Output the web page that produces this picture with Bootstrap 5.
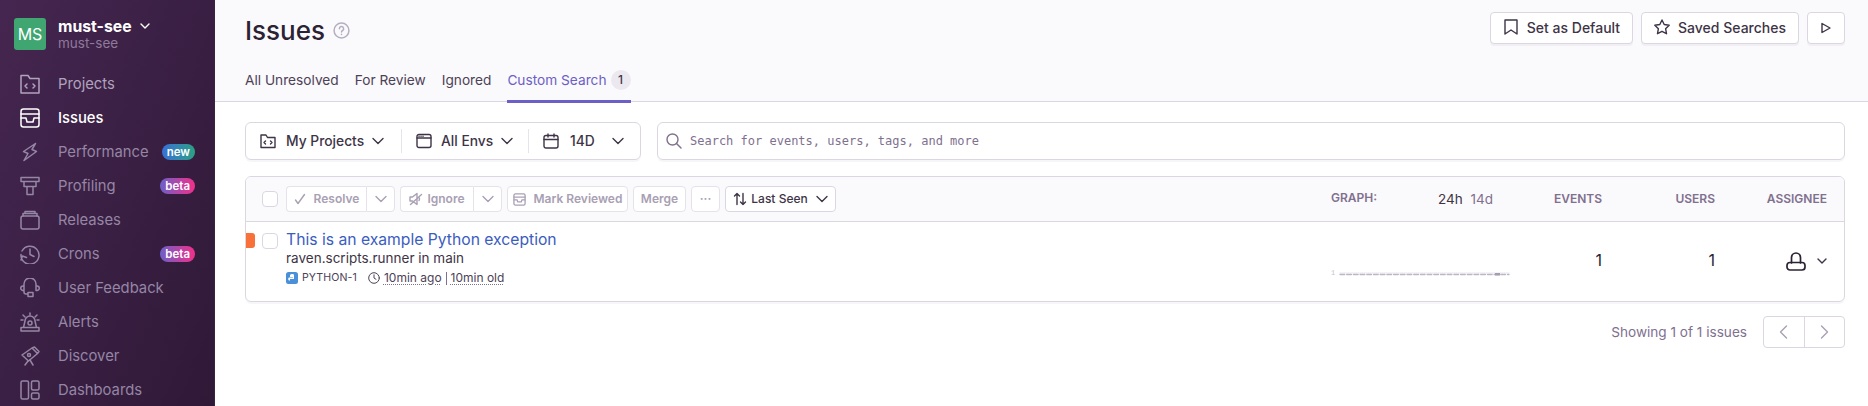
<!DOCTYPE html>
<html><head><meta charset="utf-8">
<link href="https://cdn.jsdelivr.net/npm/bootstrap@5.3.0/dist/css/bootstrap.min.css" rel="stylesheet">
<style>
html,body{height:406px;overflow:hidden}
body{font-family:Inter,"Liberation Sans",sans-serif;color:#2b2233;background:#fff;font-size:15px}
svg{fill:none;stroke:currentColor;stroke-width:1.4;stroke-linecap:round;stroke-linejoin:round;flex:none}
.shell{height:406px}
.side{width:215px;height:406px;background:linear-gradient(294deg,#2f1937 0%,#452650 100%);box-shadow:inset -1px 0 0 #3a2243;overflow:hidden;flex:none}
.orgbox{padding:18px 14px 0;height:67px}
.avatar{width:32px;height:32px;background:#3fa672;border-radius:3px;color:#fff;font-size:16px;line-height:32px;text-align:center;flex:none}
.orgname{color:#fff;font-weight:700;font-size:15.8px;line-height:17px}
.orgsub{color:#8f7a9b;font-size:13.5px;line-height:16px}
.navitem{height:34px;padding-left:20px;color:#9586a5;font-size:14.8px}
.navitem svg{width:20px;height:20px;stroke-width:1.5}
.navitem .lbl{margin-left:18px;flex:1}
.navitem.on{color:#fff;font-weight:500}
.navitem.plain{color:#b0a3bd}
.tagpill{font-size:11.5px;color:#fff;font-weight:600;border-radius:9px;height:16px;line-height:16px;padding:0 5px;margin-right:20px}
.tnew{background:linear-gradient(90deg,#3a6fd8,#2ba185)}
.tbeta{background:linear-gradient(90deg,#6c5fc7,#f32f8c)}
.mainp{min-width:0}
.head{height:102px;background:#faf9fb;border-bottom:1px solid #dbd6e1;padding:0 23px 0 30px}
.ttl{font-size:26px;font-weight:500;line-height:31px;margin:0;color:#2b2233}
.qmark{width:17px;height:17px;color:#b6aec0}
.hbtn{height:32px;background:#fff;border:1px solid #dbd6e1;border-radius:4px;font-size:14px;font-weight:500;color:#3e3446;padding:0 12px 2px;box-shadow:0 2px 0 rgba(37,11,54,.04)}
.htop{padding-top:12px;height:60px}
.tabsrow{gap:16px;height:42px}
.tabby{font-size:13.7px;color:#4d4158;height:42px;padding-top:10px;border-bottom:3px solid transparent}
.tabby.act{color:#6c5fc7;border-bottom-color:#6c5fc7;margin-bottom:-1px;height:43px}
.cnt{background:#ebe8ef;color:#3e3446;font-size:12px;font-weight:500;width:20px;height:20px;border-radius:10px;line-height:20px;text-align:center;margin-left:4px}
.bodyp{padding:20px 23px 0 30px}
.pagefilt{width:396px;height:38px;border:1px solid #dbd6e1;border-radius:6px;box-shadow:0 2px 0 rgba(37,11,54,.04);flex:none}
.pf{font-size:13.8px;font-weight:500;color:#3e3446;height:100%;padding-left:14px}
.pf .txt{margin-left:10px}
.pf2 .txt{margin-left:9px}
.pf3 .txt{margin-left:11px}
.pf1{width:155px}.pf2{width:126px}
.vsep{width:1px;height:24px;background:#e7e3eb}
.srch{height:38px;border:1px solid #dbd6e1;border-radius:6px;margin-left:16px;font-family:"DejaVu Sans Mono",monospace;font-size:12px;color:#80708f;padding-left:8px;box-shadow:0 2px 0 rgba(37,11,54,.04)}
.tblbox{margin-top:16px;border:1px solid #dbd6e1;border-radius:6px;height:126px;box-shadow:0 2px 0 rgba(37,11,54,.04);overflow:hidden}
.thead{height:45px;background:#faf9fb;border-bottom:1px solid #dbd6e1;padding-left:16px}
.cb{width:16px;height:16px;border:1px solid #dbd6e1;border-radius:4px;background:#fff;flex:none}
.actrow{gap:5px}
.actb{height:26px;border:1px solid #e6e2ea;border-radius:4px;background:#fff;font-size:12px;font-weight:600;color:#a9a0b3;justify-content:center}
.actb.dark{color:#3e3446;border-color:#dbd6e1;font-weight:500;width:111px}
.grpl{border-radius:4px 0 0 4px;border-right:0}
.grpr{border-radius:0 4px 4px 0;width:29px}
.w-res{width:80px}.w-ign{width:73px}.w-mark{width:121px}.w-merge{width:53px}.w-dots{width:29px}
.hcol{font-size:12px;font-weight:600;color:#80708f;text-transform:uppercase}
.cgraph{width:107px}.cperiod{width:112px}.cnum1{width:52px}.cnum2{width:113px}.cass{width:112px}
.hcolg{margin-top:-3px}
.period{font-size:13.5px;color:#3e3446}
.period span{color:#80708f}
.hlast{margin-right:17px}
.row1{height:78px;position:relative}
.lev{position:absolute;left:0;top:11px;width:9px;height:15px;background:#f9713a;border-radius:0 3px 3px 0}
.rowmain{padding:8px 0 0 16px}
.cbrow{margin-top:3px}
.itl{color:#3b5cc0;font-size:15.7px;line-height:19px}
.ism{font-size:13.5px;color:#3e3446;line-height:17px;margin-top:1px}
.imeta{font-size:12px;color:#4d4158;line-height:18px;margin-top:2px}
.imeta u{text-decoration:underline dotted #80708f;text-underline-offset:2px}
.pyid{font-size:10.6px;letter-spacing:.1px}
.metasep{border-left:1px solid #80708f;height:13px}
.clock{stroke-width:1;margin-left:11px}
.pyic{stroke:none}
.numc{font-size:16px;color:#2b2233;margin-top:26px}
.sparkcell{margin-top:37px}
.spark{width:178px;height:12px;overflow:visible;stroke:none}
.assc{margin-top:30px;margin-right:17px}
.assic{color:#2b2233;stroke-width:1.7}
.asscaret{color:#3e3446;margin-left:11px}
.foot{margin-top:14px;font-size:13.6px;color:#80708f}
.pager{height:32px;border:1px solid #dbd6e1;border-radius:4px;width:82px;margin-left:16px;color:#a9a0b3}
.pager span{flex:1;height:100%}
.pager span:first-child{border-right:1px solid #dbd6e1}
</style></head>
<body>
<div class="shell d-flex">
<aside class="side">
 <div class="orgbox d-flex gap-2">
  <div class="avatar">MS</div>
  <div class="ms-1">
   <div class="orgname d-flex align-items-center">must-see <svg class="ms-2" width="10" height="7" viewBox="0 0 10 7" style="color:#fff"><path d="M1 1l4 4 4-4"/></svg></div>
   <div class="orgsub">must-see</div>
  </div>
 </div>
 <div class="navitem plain d-flex align-items-center"><svg viewBox="0 0 20 20"><path d="M1 1.500h7l2 3h9v14.500H1z"/><path d="M7 10l-2 2 2 2M13 10l2 2-2 2"/></svg><span class="lbl">Projects</span></div>
 <div class="navitem on d-flex align-items-center"><svg viewBox="0 0 20 20"><rect x="1" y="1" width="18" height="18" rx="2.500"/><path d="M1 6h18M1 10h5l1 4h6l1-4h5"/></svg><span class="lbl">Issues</span></div>
 <div class="navitem d-flex align-items-center"><svg viewBox="0 0 20 20"><path d="M15.500 1.500L3.500 9.500l4.500 2-4 7 12.500-9-4.500-2z"/></svg><span class="lbl">Performance</span><span class="tagpill tnew">new</span></div>
 <div class="navitem d-flex align-items-center"><svg viewBox="0 0 20 20"><path d="M1 1.500h18v4H1zM4 5.500v5h12v-5M7 10.500v8h6v-8"/></svg><span class="lbl">Profiling</span><span class="tagpill tbeta">beta</span></div>
 <div class="navitem d-flex align-items-center"><svg viewBox="0 0 20 20"><rect x="1" y="6" width="18" height="13" rx="2"/><path d="M3 6V3.500h14V6M5 3.500V1.500h10v2"/></svg><span class="lbl">Releases</span></div>
 <div class="navitem d-flex align-items-center"><svg viewBox="0 0 20 20"><path d="M2 7a9 9 0 1 1-1 3.500M1 16l1.500-4 4 1.500M10 5v5.500l4 2"/></svg><span class="lbl">Crons</span><span class="tagpill tbeta">beta</span></div>
 <div class="navitem d-flex align-items-center"><svg viewBox="0 0 20 20"><path d="M4 8V6a6 6 0 0 1 12 0v2M4 8H3a2 2 0 0 0 0 4.500h1zM16 8h1a2 2 0 0 1 0 4.500h-1zM4 12.500V14a2 2 0 0 0 2 2h2M8 14.500h5v4H8z"/></svg><span class="lbl">User Feedback</span></div>
 <div class="navitem d-flex align-items-center"><svg viewBox="0 0 20 20"><path d="M1 15.500h18v3.500H1zM3.500 15.500L5 9a5 5 0 0 1 10 0l1.500 6.500"/><circle cx="10" cy="11" r="2"/><path d="M10 1v2M3 3l2 2M17 3l-2 2M1 8h2M17 8h2"/></svg><span class="lbl">Alerts</span></div>
 <div class="navitem d-flex align-items-center"><svg viewBox="0 0 20 20"><path d="M2 9l10-7 5.500 5.500-9 7.500zM12 2l2.500-1 4.500 4.500-1.500 2"/><circle cx="9" cy="9" r="1.500"/><path d="M8 15l-3 4M10 14l3 5"/></svg><span class="lbl">Discover</span></div>
 <div class="navitem d-flex align-items-center"><svg viewBox="0 0 20 20"><rect x="1" y="1" width="7.500" height="18" rx="1.500"/><rect x="11.500" y="1" width="7.500" height="9" rx="1.500"/><rect x="11.500" y="13" width="7.500" height="6" rx="1.500"/></svg><span class="lbl">Dashboards</span></div>
</aside>
<main class="mainp flex-grow-1">
 <header class="head">
  <div class="htop d-flex justify-content-between">
   <div class="d-flex align-items-center gap-2" style="height:36px"><h1 class="ttl">Issues</h1><svg class="qmark" viewBox="0 0 16 16"><circle cx="8" cy="8" r="7"/><path d="M6 6.300a2 2 0 1 1 3 1.700c-.7.400-1 .8-1 1.500M8 11.500v.3"/></svg></div>
   <div class="d-flex gap-2">
    <div class="hbtn d-flex align-items-center gap-2"><svg width="16" height="16" viewBox="0 0 16 16"><path d="M2 1h12v14L8 11 2 15z"/></svg>Set as Default</div>
    <div class="hbtn d-flex align-items-center gap-2"><svg width="16" height="16" viewBox="0 0 16 16"><path d="M8 1l2.200 4.500 5 .7-3.600 3.500.9 5L8 12.300l-4.500 2.400.9-5L.8 6.200l5-.7z"/></svg>Saved Searches</div>
    <div class="hbtn d-flex align-items-center justify-content-center" style="width:38px;padding:0"><svg width="12" height="12" viewBox="0 0 12 12"><path d="M2 1.500l8 4.500-8 4.500z"/></svg></div>
   </div>
  </div>
  <div class="tabsrow d-flex">
   <div class="tabby">All Unresolved</div><div class="tabby">For Review</div><div class="tabby">Ignored</div>
   <div class="tabby act d-flex align-items-start">Custom Search<span class="cnt">1</span></div>
  </div>
 </header>
 <div class="bodyp">
  <div class="d-flex">
   <div class="pagefilt d-flex align-items-center">
    <div class="pf pf1 d-flex align-items-center"><svg width="16" height="16" viewBox="0 0 16 16"><path d="M1 2h5l1.500 2.500H15V14.500H1z"/><path d="M5.500 8L4 9.500 5.500 11M10.500 8L12 9.500 10.500 11"/></svg><span class="txt">My Projects</span><svg class="ms-2" width="12" height="8" viewBox="0 0 12 8"><path d="M1 1.500l5 5 5-5"/></svg></div>
    <div class="vsep"></div>
    <div class="pf pf2 d-flex align-items-center"><svg width="16" height="16" viewBox="0 0 16 16"><rect x="1" y="1.500" width="14" height="13" rx="2"/><path d="M1 5h14M3 3.300h.1M5 3.300h.1M7 3.300h.1"/></svg><span class="txt">All Envs</span><svg class="ms-2" width="12" height="8" viewBox="0 0 12 8"><path d="M1 1.500l5 5 5-5"/></svg></div>
    <div class="vsep"></div>
    <div class="pf pf3 d-flex align-items-center flex-grow-1 pe-3"><svg width="16" height="16" viewBox="0 0 16 16"><rect x="1" y="2.500" width="14" height="12.500" rx="2"/><path d="M1 6.500h14M5 1v3M11 1v3"/></svg><span class="txt flex-grow-1">14D</span><svg width="12" height="8" viewBox="0 0 12 8"><path d="M1 1.500l5 5 5-5"/></svg></div>
   </div>
   <div class="srch flex-grow-1 d-flex align-items-center"><svg class="me-2" width="16" height="16" viewBox="0 0 16 16"><circle cx="6.500" cy="6.500" r="5.500"/><path d="M10.500 10.500L15 15"/></svg>Search for events, users, tags, and more</div>
  </div>
  <div class="tblbox">
   <div class="thead d-flex align-items-center">
    <div class="cb me-2"></div>
    <div class="d-flex actrow align-items-center">
     <div class="d-flex"><div class="actb grpl w-res d-flex align-items-center gap-1"><svg width="12" height="12" viewBox="0 0 12 12"><path d="M1.500 7l2.500 3.500L10.500 1.500"/></svg><span class="ms-1">Resolve</span></div><div class="actb grpr d-flex align-items-center"><svg width="12" height="8" viewBox="0 0 12 8"><path d="M1 1.500l5 5 5-5"/></svg></div></div>
     <div class="d-flex"><div class="actb grpl w-ign d-flex align-items-center gap-1"><svg width="14" height="14" viewBox="0 0 14 14"><path d="M1 5h2.500L8 1.500v11L3.500 9H1zM1.500 12.500l11-10M10 5.500a2.500 2.500 0 0 1 0 3"/></svg><span>Ignore</span></div><div class="actb grpr d-flex align-items-center"><svg width="12" height="8" viewBox="0 0 12 8"><path d="M1 1.500l5 5 5-5"/></svg></div></div>
     <div class="actb w-mark d-flex align-items-center gap-1"><svg width="13" height="13" viewBox="0 0 14 14"><rect x="1" y="1" width="12" height="12" rx="1.500"/><path d="M1 4.500h12M1 7.500h3.500l.5 2h4l.5-2H13"/></svg><span class="ms-1">Mark Reviewed</span></div>
     <div class="actb w-merge d-flex align-items-center">Merge</div>
     <div class="actb w-dots d-flex align-items-center">···</div>
     <div class="actb dark d-flex align-items-center gap-1"><svg width="14" height="14" viewBox="0 0 14 14"><path d="M4 12.500V1.500M1.500 4L4 1.500 6.500 4M10 1.500v11M7.500 10l2.500 2.500 2.500-2.500"/></svg><span>Last Seen</span><svg class="ms-1" width="12" height="8" viewBox="0 0 12 8"><path d="M1 1.500l5 5 5-5"/></svg></div>
    </div>
    <div class="ms-auto d-flex align-items-center hlast">
     <div class="hcol hcolg cgraph">Graph:</div>
     <div class="cperiod period">24h <span class="ms-1">14d</span></div>
     <div class="hcol text-end cnum1">Events</div>
     <div class="hcol text-end cnum2">Users</div>
     <div class="hcol text-end cass">Assignee</div>
    </div>
   </div>
   <div class="row1 d-flex">
    <div class="lev"></div>
    <div class="rowmain d-flex flex-grow-1">
     <div class="cb me-2 cbrow"></div>
     <div>
      <div class="itl">This is an example Python exception</div>
      <div class="ism">raven.scripts.runner in main</div>
      <div class="imeta d-flex align-items-center"><svg class="pyic" width="12" height="12" viewBox="0 0 12 12"><rect width="12" height="12" rx="2.500" fill="#4a90d9"/><path d="M6 2c-2 0-2 1-2 2v1h3v.500H3c-1 0-1 3 0 3h1V7h4V3c0-.6-1-1-2-1z" fill="#fff"/></svg><span class="ms-1 pyid">PYTHON-1</span><svg class="clock" width="12" height="12" viewBox="0 0 12 12"><circle cx="6" cy="6" r="5.300"/><path d="M6 2.800V6l2 1.300"/></svg><span class="ms-1"><u>10min ago</u></span><span class="mx-1 metasep"></span><u>10min old</u></div>
     </div>
    </div>
    <div class="d-flex align-items-start">
     <div class="cgraph sparkcell"><svg class="spark" viewBox="0 0 178 12"><text x="0" y="10" font-size="7" fill="#c8c2d0" font-family="Liberation Mono">1</text><line x1="9" y1="8" x2="178" y2="8" stroke="#e0dce5" stroke-width=".8" stroke-dasharray="1 1" style="stroke:#e0dce5"/><line x1="9" y1="9.500" x2="178" y2="9.500" stroke="#bdb6c6" stroke-width="1.300" stroke-dasharray="4.700 2" style="stroke:#bdb6c6"/><rect x="164" y="8" width="5" height="2.500" fill="#a59db0"/></svg></div>
     <div class="cperiod"></div>
     <div class="numc text-end cnum1">1</div>
     <div class="numc text-end cnum2">1</div>
     <div class="d-flex justify-content-end align-items-center cass assc"><svg class="assic" width="20" height="19" viewBox="0 0 20 19"><path d="M5.500 11V5.500a4.500 4.500 0 0 1 9 0V11"/><rect x="1" y="10.500" width="18" height="7.500" rx="3"/></svg><svg class="asscaret" width="10" height="7" viewBox="0 0 10 7"><path d="M1 1l4 4 4-4"/></svg></div>
    </div>
   </div>
  </div>
  <div class="foot d-flex justify-content-end align-items-center">Showing 1 of 1 issues<div class="pager d-flex"><span class="d-flex align-items-center justify-content-center"><svg width="9" height="14" viewBox="0 0 9 14"><path d="M7.500 1L1.500 7l6 6"/></svg></span><span class="d-flex align-items-center justify-content-center"><svg width="9" height="14" viewBox="0 0 9 14"><path d="M1.500 1l6 6-6 6"/></svg></span></div></div>
 </div>
</main>
</div>
</body></html>
